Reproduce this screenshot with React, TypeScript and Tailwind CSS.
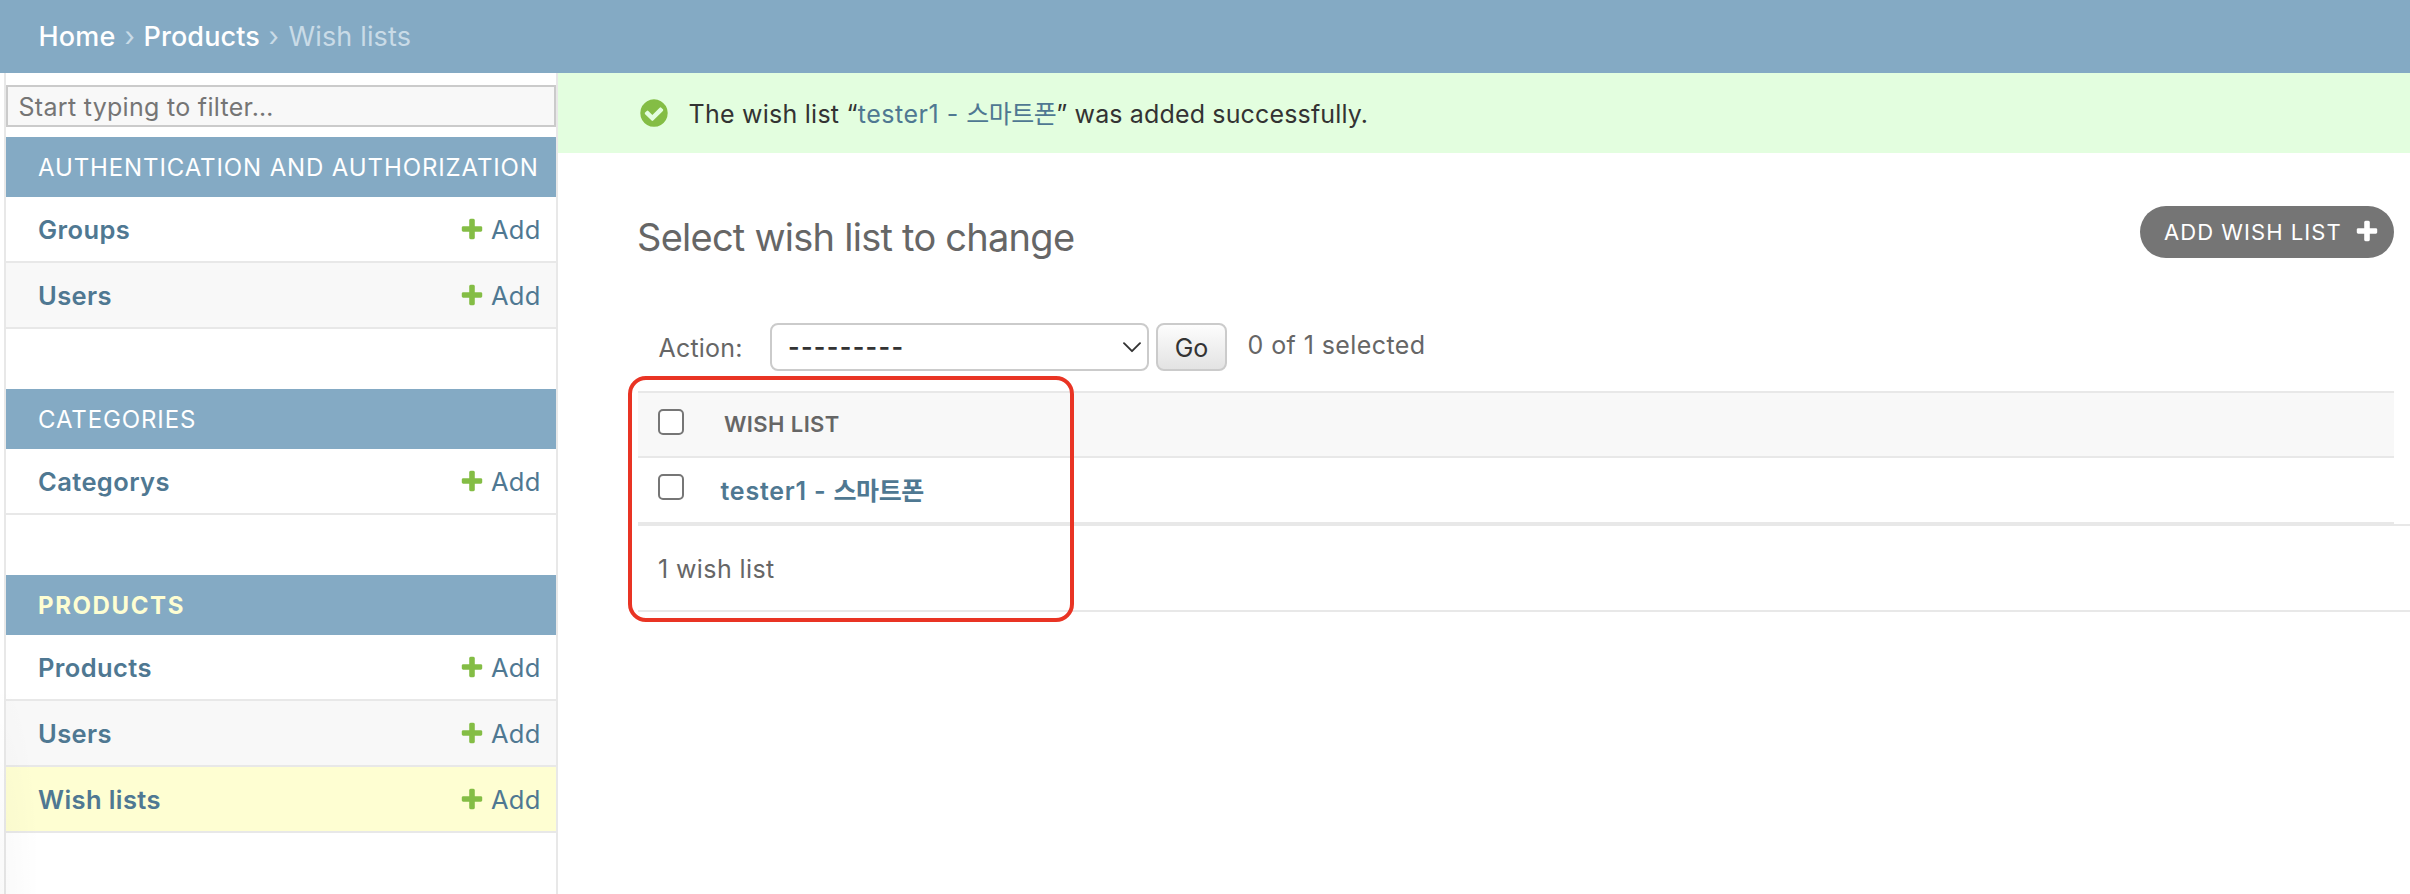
const PLUS_PATH =
  "M1600 796v192q0 40-28 68t-68 28h-416v416q0 40-28 68t-68 28h-192q-40 0-68-28t-28-68v-416h-416q-40 0-68-28t-28-68v-192q0-40 28-68t68-28h416v-416q0-40 28-68t68-28h192q40 0 68 28t28 68v416h416q40 0 68 28t28 68z";
const CHECK_PATH =
  "M1412 734q0-28-18-46l-91-90q-19-19-45-19t-45 19l-408 407-226-226q-19-19-45-19t-45 19l-91 90q-18 18-18 46 0 27 18 45l362 362q19 19 45 19 27 0 46-19l543-543q18-18 18-45zm252 162q0 209-103 385.5t-279.5 279.5-385.5 103-385.5-103-279.5-279.5-103-385.5 103-385.5 279.5-279.5 385.5-103 385.5 103 279.5 279.5 103 385.5z";

function Plus({ className }: { className: string }) {
  return (
    <svg viewBox="0 0 1792 1792" className={`size-[26px] shrink-0 ${className}`} fill="currentColor" aria-hidden="true">
      <path d={PLUS_PATH} />
    </svg>
  );
}

type Model = { name: string; alt?: boolean; current?: boolean };
type Section = { title: string; current?: boolean; models: Model[] };

const sections: Section[] = [
  { title: "AUTHENTICATION AND AUTHORIZATION", models: [{ name: "Groups" }, { name: "Users", alt: true }] },
  { title: "CATEGORIES", models: [{ name: "Categorys" }] },
  {
    title: "PRODUCTS",
    current: true,
    models: [{ name: "Products" }, { name: "Users", alt: true }, { name: "Wish lists", current: true }],
  },
];

function ModelRow({ name, alt, current }: Model) {
  const bg = current ? "bg-[#fefed2]" : alt ? "bg-[#f8f8f8]" : "bg-white";
  return (
    <div
      className={`flex h-[66px] items-center justify-between border-b-2 border-[#e8e8e8] pt-[2px] pr-[15.5px] pl-8 text-[25.5px] text-[#4f7892] ${bg}`}
    >
      <a className="font-semibold tracking-[0.4px]">{name}</a>
      <a className="flex items-center gap-[6px] tracking-[0.2px]">
        <Plus className="-mt-[3px] text-[#84bd45]" />
        Add
      </a>
    </div>
  );
}

function Sidebar() {
  return (
    <nav className="relative flex w-[558px] shrink-0 pl-1">
      <div className="w-full border-x-2 border-[#e8e8e8] pt-3">
        <input
          className="block h-[42px] w-full border-2 border-[#cbcbcb] bg-[#f8f8f8] px-[10.5px] pt-px text-[25px] tracking-[0.3px] placeholder:text-[#757575] placeholder:opacity-100"
          placeholder="Start typing to filter…"
        />
        <div className="mt-[10px] flex flex-col gap-[60px]">
          {sections.map((s) => (
            <section key={s.title}>
              <h2
                className={`flex h-[60px] items-center bg-[#84aac4] pt-[2px] pl-8 text-[24px] whitespace-nowrap ${
                  s.current ? "font-bold tracking-[1.6px] text-[#fefed2]" : "tracking-[0.88px] text-white"
                }`}
              >
                {s.title}
              </h2>
              {s.models.map((m) => (
                <ModelRow key={m.name} {...m} />
              ))}
            </section>
          ))}
        </div>
      </div>
      <div className="pointer-events-none absolute bottom-0 left-0 h-[200px] w-9 bg-[radial-gradient(ellipse_at_bottom_left,rgba(0,0,0,0.022),rgba(0,0,0,0)_80%)]" />
    </nav>
  );
}

function Checkbox({ className }: { className: string }) {
  return (
    <input
      type="checkbox"
      className={`size-[26px] shrink-0 appearance-none rounded-[5px] border-2 border-[#767676] bg-white ${className}`}
    />
  );
}

function Message() {
  return (
    <div className="flex h-20 items-center bg-[#e3fedf] pl-20 text-[25px] whitespace-pre text-[#333]">
      <svg viewBox="0 0 1792 1792" className="size-8 text-[#84bd45]" fill="currentColor" aria-hidden="true">
        <path d={CHECK_PATH} />
      </svg>
      <p className="pt-[3px] pl-[18.5px]">
        <span className="tracking-[0.25px]">The wish list “</span>
        <a className="text-[#4f7892]">
          <span className="tracking-[0.5px]">tester1 - </span>
          <span className="tracking-[-0.5px]">스마트폰</span>
        </a>
        <span className="tracking-[0.15px]">” was added successfully.</span>
      </p>
    </div>
  );
}

export default function App() {
  return (
    <div className="flex h-[894px] w-full flex-col overflow-hidden bg-white font-['Inter','Noto_Sans_CJK_KR',sans-serif]">
      <header className="flex h-[73px] shrink-0 items-center bg-[#84aac4] pt-[2px] pl-[38.5px] text-[27px] text-white">
        <a className="w-[86px] font-medium tracking-[0.2px]">Home</a>
        <span className="w-[19px] text-[#c9dbe7]">›</span>
        <a className="w-[125px] font-medium tracking-[0.1px]">Products</a>
        <span className="w-5 text-[#c9dbe7]">›</span>
        <span className="tracking-[0.15px] text-[#c9dbe7]">Wish lists</span>
      </header>
      <div className="flex min-h-0 flex-1">
        <Sidebar />
        <main className="min-w-0 flex-1">
          <Message />
          <div className="flex h-[170px] items-start justify-between pt-[53px] pr-4 pl-[79px]">
            <h1 className="pt-[8px] text-[38px] leading-[46px] tracking-[-0.75px] text-[#666]">
              Select wish list to change
            </h1>
            <a className="flex h-[52px] w-[254px] items-center rounded-full bg-[#757575] pl-6 text-[22px] text-white">
              <span className="w-[190px] pt-px tracking-[1.05px]">ADD WISH LIST</span>
              <Plus className="-mt-[2px] text-white" />
            </a>
          </div>
          <div className="flex h-12 items-center pl-[100.5px] text-[25px] text-[#666]">
            <label className="w-[111.5px] pt-[4px] tracking-[0.2px]">Action:</label>
            <div className="flex h-12 w-[379px] items-center justify-between rounded-[8px] border-2 border-[#cbcbcb] bg-white pr-[6px] pl-[16px] text-[#333]">
              <span className="pt-[2px] font-semibold tracking-[1.3px]">---------</span>
              <svg viewBox="0 0 18 11" className="h-[11px] w-[18px]" fill="none" stroke="#333" strokeWidth="1.9" aria-hidden="true">
                <path d="M1 1.2 9 9.2 17 1.2" strokeLinecap="round" strokeLinejoin="round" />
              </svg>
            </div>
            <button className="ml-[7px] h-12 w-[71px] rounded-[8px] border-2 border-[#cbcbcb] bg-linear-to-b from-[#fdfdfd] to-[#e3e3e3] pt-[3px] text-[#333]">
              Go
            </button>
            <span className="-mt-[2px] ml-[20.5px] tracking-[0.42px]">0 of 1 selected</span>
          </div>
          <div className="relative mt-5 ml-20">
            <div className="mr-4">
              <div className="flex h-[67px] border-y-2 border-[#e8e8e8] bg-[#f8f8f8] pl-5">
                <Checkbox className="mt-4" />
                <span className="pt-[15px] pl-10 text-[22px] leading-8 font-semibold tracking-[0.4px] text-[#666]">
                  WISH LIST
                </span>
              </div>
              <div className="flex h-[66px] border-b-2 border-[#e8e8e8] pl-5">
                <Checkbox className="mt-4" />
                <a className="pt-[17px] pl-[36.5px] text-[25px] leading-8 font-semibold whitespace-pre text-[#4f7892]">
                  <span className="tracking-[0.78px]">tester1 - </span>
                  <span className="tracking-[-0.4px]">스마트폰</span>
                </a>
              </div>
            </div>
            <p className="flex h-[88px] items-center border-y-2 border-[#e8e8e8] pt-[3px] pl-5 text-[25px] tracking-[0.4px] text-[#666]">
              1 wish list
            </p>
            <div className="pointer-events-none absolute -top-[15px] -left-[10px] h-[246px] w-[446px] rounded-[18px] border-4 border-[#e93424]" />
          </div>
        </main>
      </div>
    </div>
  );
}
